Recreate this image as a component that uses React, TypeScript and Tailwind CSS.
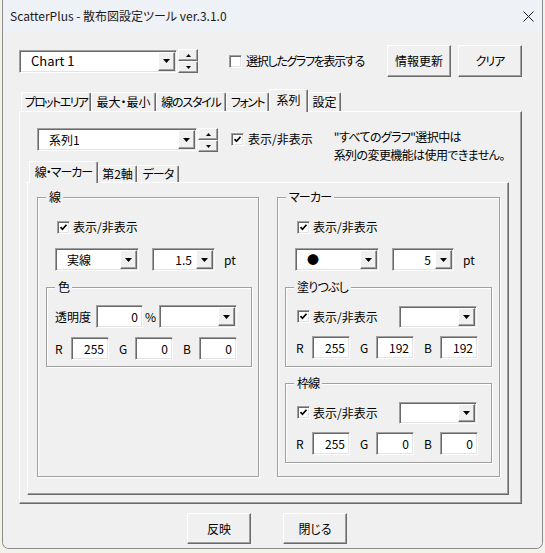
import React from "react";

const raised =
  "bg-[#f0f0f0] border border-t-white border-l-white border-r-[#696969] border-b-[#696969] shadow-[inset_-1px_-1px_0_#a0a0a0]";
const sunken =
  "bg-white border border-t-[#a0a0a0] border-l-[#a0a0a0] border-r-white border-b-white shadow-[inset_1px_1px_0_#696969,inset_-1px_-1px_0_#e3e3e3]";

const DownArrow = () => (
  <svg width="7" height="4" viewBox="0 0 7 4">
    <path d="M0 0h7L3.5 4z" fill="#000" />
  </svg>
);

const Combo = ({ className, value = "", right = false }: { className: string; value?: string; right?: boolean }) => (
  <div className={`${sunken} flex items-stretch shrink-0 ${className}`}>
    <div className={`flex-1 flex items-center ${right ? "justify-end pr-[3px]" : "pl-[11px]"}`}>{value}</div>
    <div className={`${raised} w-[17px] m-[1px] flex items-center justify-center`}>
      <DownArrow />
    </div>
  </div>
);

const Spin = () => (
  <div className="w-[20px] h-[24px] flex flex-col shrink-0">
    <div className={`${raised} flex-1 flex items-center justify-center`}>
      <svg width="5" height="3" viewBox="0 0 5 3">
        <path d="M2.5 0L5 3H0z" fill="#000" />
      </svg>
    </div>
    <div className={`${raised} flex-1 flex items-center justify-center`}>
      <svg width="5" height="3" viewBox="0 0 5 3">
        <path d="M0 0h5L2.5 3z" fill="#000" />
      </svg>
    </div>
  </div>
);

const Check = ({ checked }: { checked?: boolean }) => (
  <div className={`${sunken} w-[13px] h-[13px] shrink-0 flex items-center justify-center`}>
    {checked && (
      <svg width="9" height="9" viewBox="0 0 9 9">
        <path d="M1.5 4.2l2 2.1 4-4.6" stroke="#000" strokeWidth="1.7" fill="none" />
      </svg>
    )}
  </div>
);

const Field = ({ value, className }: { value: string; className: string }) => (
  <div className={`${sunken} h-[23px] flex items-center justify-end pr-[4px] shrink-0 ${className}`}>{value}</div>
);

const Group = ({ label, className, children }: { label: string; className: string; children?: React.ReactNode }) => (
  <div className={`border border-[#a0a0a0] shadow-[inset_1px_1px_0_white,1px_1px_0_white] flex flex-col shrink-0 ${className}`}>
    <div className="-mt-[9px] ml-[8px] self-start px-[3px] bg-[#f0f0f0] leading-[16px] h-[16px] tracking-[-0.8px]">{label}</div>
    {children}
  </div>
);

const Rgb = ({ r, g, b, className }: { r: string; g: string; b: string; className: string }) => (
  <div className={`flex items-center h-[23px] ${className}`}>
    <span className="w-[16px]">R</span>
    <Field value={r} className="w-[38px]" />
    <span className="ml-[10px] w-[16px]">G</span>
    <Field value={g} className="w-[38px]" />
    <span className="ml-[10px] w-[16px]">B</span>
    <Field value={b} className="w-[38px]" />
  </div>
);

const Tab = ({ label, className, active }: { label: string; className: string; active?: boolean }) => (
  <div
    className={`flex items-center justify-center shrink-0 whitespace-nowrap bg-[#f0f0f0] border-t border-l border-r border-t-white border-l-white border-r-[#696969] shadow-[inset_-1px_0_0_#a0a0a0] rounded-t-[2px] ${
      active ? "relative z-10 -mb-[1px] pb-[2px]" : ""
    } ${className}`}
  >
    {label}
  </div>
);

const ShowRow = ({ className }: { className: string }) => (
  <div className={`flex items-center h-[16px] ${className}`}>
    <Check checked />
    <span className="ml-[3px]">表示/非表示</span>
  </div>
);

export default function App() {
  return (
    <div className="w-[545px] h-[553px] bg-[#f3f1ea] text-[12px] text-black font-['Noto_Sans_CJK_JP',sans-serif] [font-feature-settings:'palt'] leading-[16px]">
      <div className="w-[541px] h-[549px] ml-[2px] border-x border-b border-[#8c8c8c] rounded-b-[7px] overflow-hidden flex flex-col">
        {/* title bar */}
        <div className="h-[32px] bg-[#eef2f7] flex items-center justify-between pl-[7px] pr-[8px]">
          <span className="text-[#1a1a1a]">ScatterPlus - 散布図設定ツール ver.3.1.0</span>
          <svg width="11" height="11" viewBox="0 0 11 11">
            <path d="M0.5 0.5l10 10M10.5 0.5l-10 10" stroke="#1a1a1a" strokeWidth="1" />
          </svg>
        </div>

        <div className="flex-1 bg-[#f0f0f0] pl-[16px] pr-[20px] pt-[13px] flex flex-col">
          {/* top row */}
          <div className="flex items-center h-[32px]">
            <Combo className="w-[158px] h-[23px] text-[13px]" value="Chart 1" />
            <div className="ml-[1px]">
              <Spin />
            </div>
            <div className="ml-[31px]">
              <Check />
            </div>
            <span className="ml-[4px] tracking-[-1.3px] whitespace-nowrap">選択したグラフを表示する</span>
            <div className="ml-auto flex gap-[7px] h-full">
              <button className={`${raised} w-[64px] h-full`}>情報更新</button>
              <button className={`${raised} w-[64px] h-full tracking-[-1px]`}>クリア</button>
            </div>
          </div>

          {/* outer tabs */}
          <div className="mt-[12px] h-[22px] flex items-end pl-[2px]">
            <Tab label="プロットエリア" className="w-[70px] h-[19px] tracking-[-1.6px]" />
            <Tab label="最大・最小" className="w-[65px] h-[19px]" />
            <Tab label="線のスタイル" className="w-[70px] h-[19px] tracking-[-1.2px]" />
            <Tab label="フォント" className="w-[43px] h-[19px] tracking-[-1.5px]" />
            <Tab label="系列" className="w-[39px] h-[23px]" active />
            <Tab label="設定" className="w-[33px] h-[19px]" />
          </div>

          {/* outer panel */}
          <div className="w-[503px] h-[393px] border border-t-white border-l-white border-r-[#696969] border-b-[#696969] shadow-[inset_-1px_-1px_0_#a0a0a0] flex flex-col">
            <div className="mt-[16px] ml-[17px] flex items-start h-[23px]">
              <Combo className="w-[160px] h-[23px]" value="系列1" />
              <div className="ml-[1px]">
                <Spin />
              </div>
              <div className="ml-[13px] mt-[5px]">
                <Check checked />
              </div>
              <span className="ml-[4px] mt-[3px]">表示/非表示</span>
              <div className="ml-[21px] leading-[18px] tracking-[-0.6px] whitespace-nowrap">
                <div>"すべてのグラフ"選択中は</div>
                <div>系列の変更機能は使用できません。</div>
              </div>
            </div>

            <div className="ml-[7px] mt-[10px] flex flex-col">
              <div className="h-[21px] flex items-end pl-[2px]">
                <Tab label="線・マーカー" className="w-[69px] h-[22px] tracking-[-1px]" active />
                <Tab label="第2軸" className="w-[39px] h-[17px]" />
                <Tab label="データ" className="w-[42px] h-[17px] tracking-[-1px]" />
              </div>
              <div className="w-[482px] h-[313px] border border-t-white border-l-white border-r-[#696969] border-b-[#696969] shadow-[inset_-1px_-1px_0_#a0a0a0] flex items-start gap-[18px] pt-[14px] pl-[9px]">
                {/* 線 */}
                <Group label="線" className="w-[222px] h-[280px]">
                  <ShowRow className="mt-[14px] ml-[19px]" />
                  <div className="mt-[13px] ml-[17px] flex items-center h-[23px]">
                    <Combo className="w-[84px] h-[23px]" value="実線" />
                    <Combo className="ml-[13px] w-[63px] h-[23px]" value="1.5" right />
                    <span className="ml-[9px]">pt</span>
                  </div>
                  <Group label="色" className="mt-[16px] ml-[8px] w-[206px] h-[80px]">
                    <div className="mt-[10px] ml-[8px] flex items-center h-[23px]">
                      <span className="w-[36px]">透明度</span>
                      <Field value="0" className="ml-[5px] w-[47px]" />
                      <span className="w-[16px] pl-[2px]">%</span>
                      <Combo className="w-[78px] h-[23px]" />
                    </div>
                    <Rgb r="255" g="0" b="0" className="mt-[9px] ml-[8px]" />
                  </Group>
                </Group>

                {/* マーカー */}
                <Group label="マーカー" className="w-[223px] h-[280px]">
                  <ShowRow className="mt-[14px] ml-[19px]" />
                  <div className="mt-[13px] ml-[17px] flex items-center h-[23px]">
                    <Combo className="w-[84px] h-[23px]" value="●" />
                    <Combo className="ml-[13px] w-[62px] h-[23px]" value="5" right />
                    <span className="ml-[9px]">pt</span>
                  </div>
                  <Group label="塗りつぶし" className="mt-[16px] ml-[7px] w-[207px] h-[80px]">
                    <div className="mt-[10px] ml-[11px] mr-[14px] flex items-center h-[23px]">
                      <Check checked />
                      <span className="ml-[3px]">表示/非表示</span>
                      <Combo className="ml-auto w-[78px] h-[22px]" />
                    </div>
                    <Rgb r="255" g="192" b="192" className="mt-[8px] ml-[10px]" />
                  </Group>
                  <Group label="枠線" className="mt-[16px] ml-[7px] w-[207px] h-[80px]">
                    <div className="mt-[10px] ml-[11px] mr-[14px] flex items-center h-[23px]">
                      <Check checked />
                      <span className="ml-[3px]">表示/非表示</span>
                      <Combo className="ml-auto w-[78px] h-[22px]" />
                    </div>
                    <Rgb r="255" g="0" b="0" className="mt-[8px] ml-[10px]" />
                  </Group>
                </Group>
              </div>
            </div>
          </div>

          {/* bottom buttons */}
          <div className="mt-[9px] flex h-[31px]">
            <button className={`${raised} ml-[168px] w-[64px] h-full`}>反映</button>
            <button className={`${raised} ml-[32px] w-[64px] h-full`}>閉じる</button>
          </div>
        </div>
      </div>
    </div>
  );
}
